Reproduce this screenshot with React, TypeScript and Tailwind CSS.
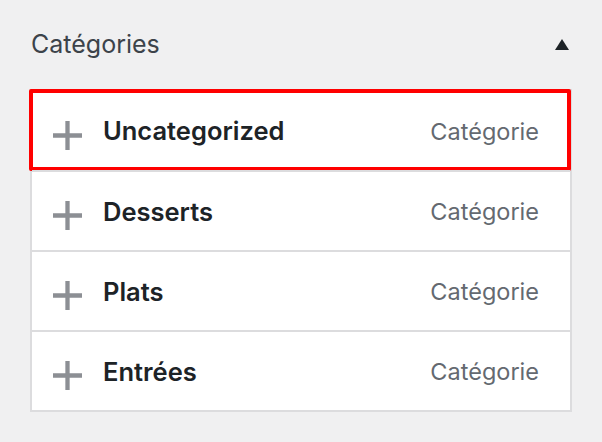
const categories = ['Uncategorized', 'Desserts', 'Plats', 'Entrées']

function PlusIcon() {
  return (
    <svg width="29" height="29" viewBox="0 0 29 29" className="mt-[9px] shrink-0">
      <path d="M14.5 0v29M0 14.5h29" stroke="#8c8f94" strokeWidth="4.3" />
    </svg>
  )
}

export default function App() {
  return (
    <div className="h-[442px] w-[602px] bg-[#f0f0f1] font-['Inter',sans-serif]">
      <div className="flex items-center justify-between pl-[31px] pr-[33px] pt-[28px]">
        <h2 className="text-[25px] leading-[32px] text-[#3c434a]">Catégories</h2>
        <span className="h-0 w-0 border-x-[7.5px] border-b-[11px] border-x-transparent border-b-[#1d2327]" />
      </div>
      <div className="mx-[30px] mt-[29px] border-2 border-[#dcdcde] bg-white">
        {categories.map((name, i) => (
          <div
            key={name}
            className={`relative flex items-center pl-[21px] pr-[31px] ${i > 0 ? 'h-[80px] border-t-2 border-[#dcdcde]' : 'h-[79px]'}`}
          >
            {i === 0 && (
              <span className="pointer-events-none absolute -bottom-[1px] -left-[3px] -right-[1px] -top-[2px] rounded-[2px] border-4 border-[#ff0000]" />
            )}
            <PlusIcon />
            <span className="ml-[21px] pt-[2px] text-[25.5px] font-semibold text-[#1d2327]">{name}</span>
            <span className="ml-auto pt-[2px] text-[23.5px] text-[#646970]">Catégorie</span>
          </div>
        ))}
      </div>
    </div>
  )
}
